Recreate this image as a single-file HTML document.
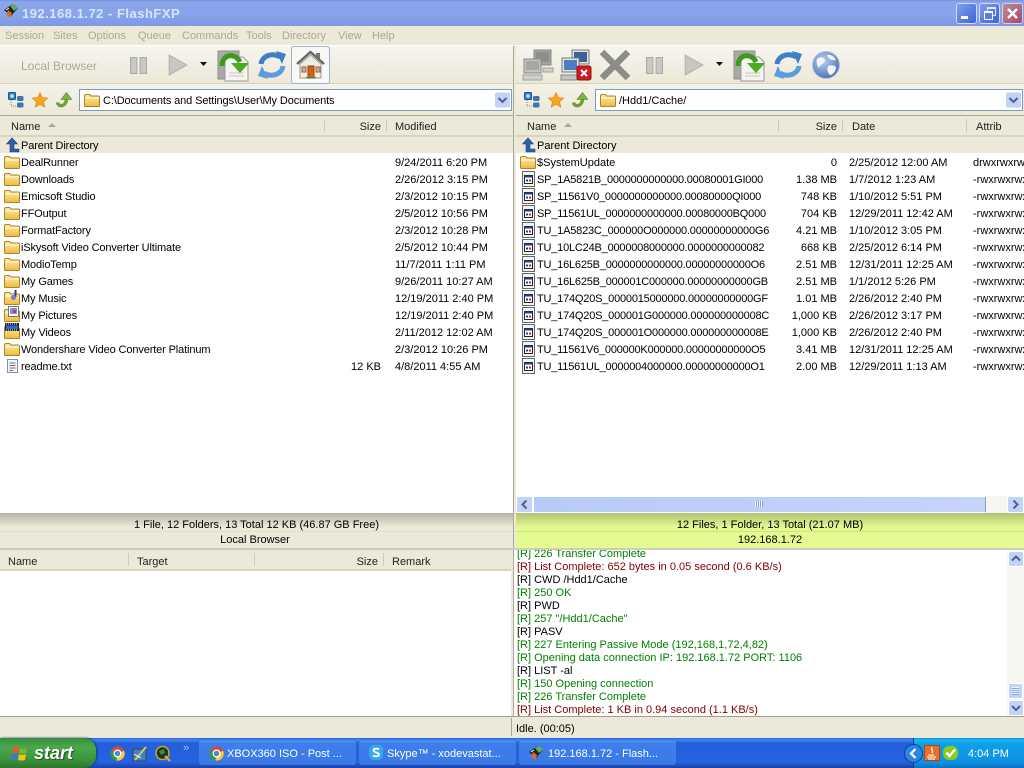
<!DOCTYPE html>
<html><head><meta charset="utf-8"><title>192.168.1.72 - FlashFXP</title>
<style>
html,body{margin:0;padding:0;width:1024px;height:768px;overflow:hidden;background:#ece9d8}
body{font:11px "Liberation Sans",sans-serif;color:#000;position:relative}
.a{position:absolute;white-space:nowrap}
.r{position:absolute;white-space:nowrap;text-align:right}
svg{position:absolute;overflow:visible}
.m{color:#aca899;top:30px;font-size:11px}
.h{top:121px;color:#222}
.g{color:#008000}.d{color:#800000}
.l{position:absolute;white-space:nowrap;height:13px;line-height:13px}
div[style*="left:537px;top"]{letter-spacing:-.2px}
div[style*="left:21px;top"]{letter-spacing:-.13px}
</style></head><body>
<svg width="0" height="0" style="position:absolute"><defs>
<linearGradient id="fg" x1="0" y1="0" x2="0" y2="1"><stop offset="0" stop-color="#ffeda6"/><stop offset="1" stop-color="#eeba3e"/></linearGradient>
<radialGradient id="gl" cx=".4" cy=".35" r=".75"><stop offset="0" stop-color="#b8d0f2"/><stop offset="1" stop-color="#3f68ac"/></radialGradient>
<symbol id="fo" viewBox="0 0 16 14"><path d="M.5 3V12.500Q.5 13.500 1.500 13.500H14.500Q15.500 13.500 15.500 12.500V4Q15.500 3 14.500 3H7L5.500 1.500H2Q.5 1.500 .5 3Z" fill="url(#fg)" stroke="#a8842a"/><path d="M1 5H15" stroke="#fff" stroke-opacity=".8"/></symbol>
<symbol id="ex" viewBox="0 0 16 16"><path d="M1.500 .5H13.500V15.500H1.500Z" fill="#f4f4f4" stroke="#666"/><rect x="3.500" y="4.500" width="8" height="8" fill="#fff" stroke="#222"/><rect x="3.500" y="4.500" width="8" height="2" fill="#1c3f9c"/><path d="M5 9.500H7" stroke="#1c3f9c" stroke-width="2"/><path d="M8 9.500H10" stroke="#c22" stroke-width="2"/></symbol>
<symbol id="dl" viewBox="0 0 32 32"><rect x="1" y="1" width="21" height="28" fill="#a9a9a5" stroke="#8e8e8a"/><path d="M8 7H26L31 12V31H8Z" fill="#f4f4f0" stroke="#999"/><path d="M12 23H27M12 26H27" stroke="#c5c5c0"/><path d="M5 16C5 4 18 2 23 12" fill="none" stroke="#3f9a1c" stroke-width="5"/><path d="M14 13H32L23 23Z" fill="#4caa1e"/></symbol>
<symbol id="rf" viewBox="0 0 28 28"><path d="M3 13C4 5 14 1 22 6" fill="none" stroke="#3e7fc8" stroke-width="5"/><path d="M18 0L28 3L24 13Z" fill="#3e7fc8"/><path d="M25 15C24 23 14 27 6 22" fill="none" stroke="#5c9bdc" stroke-width="5"/><path d="M10 28L0 25L4 15Z" fill="#5c9bdc"/></symbol>
<symbol id="pc" viewBox="0 0 32 32"><rect x="12" y="1" width="17" height="15" fill="#a2a29e" stroke="#8a8a86"/><rect x="14" y="3" width="13" height="10" fill="#8e8e8a"/><rect x="2" y="10" width="17" height="14" fill="#c4c4c0" stroke="#8a8a86"/><rect x="4" y="12" width="13" height="9" fill="#a6a6a2"/><rect x="1" y="26" width="19" height="5" fill="#d0d0cc" stroke="#a0a09c"/><rect x="21" y="19" width="10" height="4" fill="#d0d0cc" stroke="#a0a09c"/></symbol>
<symbol id="tb" viewBox="0 0 16 16"><rect x=".5" y=".5" width="7" height="7" rx="1" fill="#3a86d0" stroke="#1d4f88"/><rect x="9" y="4" width="6.500" height="5" rx="1.500" fill="#3f74b0"/><rect x="9" y="10.500" width="6.500" height="5" rx="1.500" fill="#3f74b0"/><path d="M3 8V14H8M3 7V7" stroke="#888" fill="none" stroke-dasharray="1 1"/><path d="M2 4H6M4 2V6" stroke="#fff"/></symbol>
<symbol id="st" viewBox="0 0 16 16"><path d="M8 .5L10.300 5.600L15.700 6.200L11.600 9.800L12.800 15.200L8 12.400L3.200 15.200L4.400 9.800L.3 6.200L5.700 5.600Z" fill="#f9a41e" stroke="#d9800c" stroke-width=".6"/></symbol>
<symbol id="up" viewBox="0 0 16 16"><path d="M1.500 10.500C2 15 10 15.500 10.500 7" fill="none" stroke="#6f9f38" stroke-width="3.400"/><path d="M10.500 .5L15.800 7.500H5Z" fill="#7fb342" stroke="#4e7f23" stroke-width=".6"/></symbol>
<symbol id="chr" viewBox="0 0 16 16"><circle cx="8" cy="8" r="7.500" fill="#dc4437"/><path d="M8 8L1.400 4.500A7.500 7.500 0 0 0 7 15.500Z" fill="#2e9e46"/><path d="M8 8L15 5A7.500 7.500 0 0 1 7 15.500Z" fill="#f7cb3a"/><circle cx="8" cy="8" r="3.600" fill="#4a88e0" stroke="#fff" stroke-width="1.300"/></symbol>
<symbol id="fx" viewBox="0 0 16 16"><path d="M1 7L9 1.500L15 5L8 13Z" fill="#222"/><path d="M7 3L11 1L15.500 4.500L11 8Z" fill="#58b060"/><path d="M5 7L9 10L7 15L3.500 12Z" fill="#dd6f1c"/><path d="M3 7L6 5" stroke="#fff"/></symbol>
<symbol id="dn" viewBox="0 0 17 17"><rect x=".5" y=".5" width="16" height="16" rx="2" fill="#c1d3fb" stroke="#fff"/><path d="M4.500 6.500L8.500 10.500L12.500 6.500" fill="none" stroke="#4d6185" stroke-width="2"/></symbol>
<symbol id="pl" viewBox="0 0 18 20"><path d="M1 1L17 10L1 19Z" fill="#c6c6c2" stroke="#b4b4b0"/></symbol>
<symbol id="pa" viewBox="0 0 16 16"><rect x=".5" y=".5" width="6" height="15" fill="#c9c9c5" stroke="#aaa"/><rect x="9.500" y=".5" width="6" height="15" fill="#c9c9c5" stroke="#aaa"/></symbol>
</defs></svg>

<!-- title bar -->
<div class="a" style="left:0;top:0;width:1024px;height:26px;background:linear-gradient(#7a90dc 0,#8ba6ea 8%,#87a3ea 60%,#7f99e2 100%)"></div>
<svg style="left:3px;top:3px" width="16" height="16"><use href="#fx"/></svg>
<div class="a" style="left:22px;top:6px;font:bold 13px 'Liberation Sans',sans-serif;color:#d8e4fb;letter-spacing:.5px">192.168.1.72 - FlashFXP</div>
<div class="a" style="left:956px;top:3px;width:19px;height:19px;border:1px solid #cfdcf8;border-radius:3px;background:linear-gradient(135deg,#7e9ef0,#3d62d8)"><div class="a" style="left:4px;top:12px;width:7px;height:3px;background:#fff"></div></div>
<div class="a" style="left:979px;top:3px;width:19px;height:19px;border:1px solid #cfdcf8;border-radius:3px;background:linear-gradient(135deg,#7e9ef0,#3d62d8)"><div class="a" style="left:7px;top:3px;width:7px;height:6px;border:1px solid #dfe8ff;border-top-width:2px"></div><div class="a" style="left:4px;top:7px;width:7px;height:6px;border:1px solid #fff;border-top-width:2px;background:#5a7de0"></div></div>
<div class="a" style="left:1002px;top:3px;width:19px;height:19px;border:1px solid #d8d0dc;border-radius:3px;background:linear-gradient(135deg,#c08a98,#a04c68)"><svg style="left:4px;top:4px" width="11" height="11"><path d="M1 1L10 10M10 1L1 10" stroke="#fff" stroke-width="2.400"/></svg></div>

<!-- menu -->
<div class="a m" style="left:5px">Session</div><div class="a m" style="left:53px">Sites</div><div class="a m" style="left:88px">Options</div><div class="a m" style="left:138px">Queue</div><div class="a m" style="left:182px">Commands</div><div class="a m" style="left:246px">Tools</div><div class="a m" style="left:282px">Directory</div><div class="a m" style="left:338px">View</div><div class="a m" style="left:372px">Help</div>
<div class="a" style="left:0;top:45px;width:1024px;height:1px;background:#fff"></div>

<!-- toolbars -->
<div class="a" style="left:0;top:46px;width:514px;height:37px;background:linear-gradient(#f6f5ef,#ece9d8)"></div>
<div class="a" style="left:516px;top:46px;width:508px;height:37px;background:linear-gradient(#f6f5ef,#ece9d8)"></div>
<div class="a" style="left:0;top:83px;width:1024px;height:1px;background:#d6d2bd"></div>
<div class="a" style="left:21px;top:59px;font-size:12px;color:#aca899;letter-spacing:0">Local Browser</div>
<svg style="left:130px;top:57px" width="17" height="17"><use href="#pa"/></svg>
<svg style="left:168px;top:54px" width="20" height="22"><use href="#pl"/></svg>
<svg style="left:200px;top:62px" width="7" height="4"><path d="M0 0H7L3.500 4Z" fill="#111"/></svg>
<svg style="left:217px;top:50px" width="32" height="32"><use href="#dl"/></svg>
<svg style="left:258px;top:51px" width="28" height="28"><use href="#rf"/></svg>
<div class="a" style="left:291px;top:46px;width:37px;height:36px;border:1px solid #9fb1cc;border-radius:3px;background:#f8f8f4"></div>
<svg style="left:296px;top:50px" width="29" height="29" viewBox="0 0 29 29"><path d="M1 14L14.500 2L28 14" fill="none" stroke="#666" stroke-width="2.500"/><path d="M20 3H24V9L20 6Z" fill="#777"/><path d="M4 14L14.500 5L25 14V28H4Z" fill="#f0ede0" stroke="#999"/><rect x="12" y="16" width="6" height="12" fill="#d9600e" stroke="#8a4a18"/><rect x="6" y="17" width="4" height="5" fill="#d3b27a" stroke="#866"/><rect x="20" y="17" width="4" height="5" fill="#d3b27a" stroke="#866"/><path d="M10 27.500H20" stroke="#2c9a3a"/></svg>

<svg style="left:522px;top:49px" width="32" height="32"><use href="#pc"/></svg>
<svg style="left:560px;top:49px" width="32" height="32" viewBox="0 0 32 32"><rect x="12" y="1" width="17" height="14" fill="#e4e4e0" stroke="#777"/><rect x="14" y="3" width="13" height="10" fill="#3f5f98"/><rect x="2" y="9" width="17" height="14" fill="#e4e4e0" stroke="#777"/><rect x="4" y="11" width="13" height="10" fill="#4f7cc0"/><rect x="1" y="26" width="16" height="5" fill="#c4c4c0" stroke="#888"/><rect x="17" y="17" width="14" height="14" rx="2" fill="#d01a22" stroke="#8c1016"/><path d="M21 21L27 27M27 21L21 27" stroke="#fff" stroke-width="2"/></svg>
<svg style="left:599px;top:49px" width="32" height="32"><path d="M3 3L29 29M29 3L3 29" stroke="#8c8c88" stroke-width="6.500"/></svg>
<svg style="left:646px;top:57px" width="17" height="17"><use href="#pa"/></svg>
<svg style="left:684px;top:54px" width="20" height="22"><use href="#pl"/></svg>
<svg style="left:716px;top:62px" width="7" height="4"><path d="M0 0H7L3.500 4Z" fill="#111"/></svg>
<svg style="left:733px;top:50px" width="32" height="32"><use href="#dl"/></svg>
<svg style="left:774px;top:51px" width="28" height="28"><use href="#rf"/></svg>
<svg style="left:812px;top:51px" width="28" height="28" viewBox="0 0 28 28"><circle cx="14" cy="14" r="13.500" fill="url(#gl)" stroke="#b4c2dc"/><path d="M5 8C8 5 12 6 13 9C13 13 8 13 7 17C5 15 4 11 5 8ZM15 4C18 3 22 5 24 9C20 10 16 8 15 4ZM16 15C20 14 24 14 24 17C23 22 20 24 18 24C15 21 15 18 16 15Z" fill="#f2f4f8"/></svg>

<!-- address bars -->
<div class="a" style="left:0;top:84px;width:514px;height:31px;background:linear-gradient(#f3f2ea,#ece9d8)"></div>
<div class="a" style="left:516px;top:84px;width:508px;height:31px;background:linear-gradient(#f3f2ea,#ece9d8)"></div>
<svg style="left:8px;top:92px" width="16" height="16"><use href="#tb"/></svg>
<svg style="left:32px;top:92px" width="16" height="16"><use href="#st"/></svg>
<svg style="left:56px;top:92px" width="16" height="16"><use href="#up"/></svg>
<svg style="left:524px;top:92px" width="16" height="16"><use href="#tb"/></svg>
<svg style="left:548px;top:92px" width="16" height="16"><use href="#st"/></svg>
<svg style="left:572px;top:92px" width="16" height="16"><use href="#up"/></svg>
<div class="a" style="left:79px;top:89px;width:431px;height:20px;background:#fff;border:1px solid #7f9db9"></div>
<svg style="left:84px;top:93px" width="16" height="14"><use href="#fo"/></svg>
<div class="a" style="left:103px;top:95px;letter-spacing:-.12px">C:\Documents and Settings\User\My Documents</div>
<svg style="left:494px;top:91px" width="17" height="18"><use href="#dn"/></svg>
<div class="a" style="left:595px;top:89px;width:426px;height:20px;background:#fff;border:1px solid #7f9db9"></div>
<svg style="left:600px;top:93px" width="16" height="14"><use href="#fo"/></svg>
<div class="a" style="left:619px;top:95px">/Hdd1/Cache/</div>
<svg style="left:1005px;top:91px" width="17" height="18"><use href="#dn"/></svg>

<!-- list bg -->
<div class="a" style="left:0;top:115px;width:1024px;height:1px;background:#aca899"></div>
<div class="a" style="left:0;top:116px;width:513px;height:19px;background:#ece9d8;border-bottom:2px solid #d8d4c0"></div>
<div class="a" style="left:516px;top:116px;width:508px;height:19px;background:#ece9d8;border-bottom:2px solid #d8d4c0"></div>
<div class="a" style="left:0;top:137px;width:513px;height:376px;background:#fff"></div>
<div class="a" style="left:516px;top:137px;width:508px;height:376px;background:#fff"></div>
<div class="a" style="left:513px;top:46px;width:3px;height:503px;background:#ece9d8;border-left:1px solid #aca899;box-sizing:border-box"></div>
<div class="a" style="left:0;top:137px;width:513px;height:16px;background:#ece9d8"></div>
<div class="a" style="left:516px;top:137px;width:508px;height:16px;background:#ece9d8"></div>

<!-- left headers -->
<div class="a h" style="left:11px">Name</div><svg style="left:48px;top:123px" width="8" height="4"><path d="M0 4L4 0L8 4Z" fill="#aca899"/></svg>
<div class="a" style="left:324px;top:119px;width:1px;height:13px;background:#cfcbb6"></div>
<div class="r h" style="left:331px;width:50px">Size</div>
<div class="a" style="left:386px;top:119px;width:1px;height:13px;background:#cfcbb6"></div>
<div class="a h" style="left:395px">Modified</div>

<!-- right headers -->
<div class="a h" style="left:527px">Name</div><svg style="left:564px;top:123px" width="8" height="4"><path d="M0 4L4 0L8 4Z" fill="#aca899"/></svg>
<div class="a" style="left:778px;top:119px;width:1px;height:13px;background:#cfcbb6"></div>
<div class="r h" style="left:787px;width:50px">Size</div>
<div class="a" style="left:842px;top:119px;width:1px;height:13px;background:#cfcbb6"></div>
<div class="a h" style="left:852px">Date</div>
<div class="a" style="left:966px;top:119px;width:1px;height:13px;background:#cfcbb6"></div>
<div class="a h" style="left:976px">Attrib</div>

<!-- left list -->
<svg style="left:5px;top:137px" width="15" height="16" viewBox="0 0 15 16"><path d="M7 1L1.500 7H5V15H14V12H9V7H12.500Z" fill="#2f5fa8" stroke="#1e3f78" stroke-width=".6"/></svg>
<div class="a" style="left:21px;top:140px">Parent Directory</div>
<svg style="left:4px;top:155px" width="16" height="14"><use href="#fo"/></svg><div class="a" style="left:21px;top:157px">DealRunner</div><div class="a" style="left:395px;top:157px">9/24/2011 6:20 PM</div>
<svg style="left:4px;top:172px" width="16" height="14"><use href="#fo"/></svg><div class="a" style="left:21px;top:174px">Downloads</div><div class="a" style="left:395px;top:174px">2/26/2012 3:15 PM</div>
<svg style="left:4px;top:189px" width="16" height="14"><use href="#fo"/></svg><div class="a" style="left:21px;top:191px">Emicsoft Studio</div><div class="a" style="left:395px;top:191px">2/3/2012 10:15 PM</div>
<svg style="left:4px;top:206px" width="16" height="14"><use href="#fo"/></svg><div class="a" style="left:21px;top:208px">FFOutput</div><div class="a" style="left:395px;top:208px">2/5/2012 10:56 PM</div>
<svg style="left:4px;top:223px" width="16" height="14"><use href="#fo"/></svg><div class="a" style="left:21px;top:225px">FormatFactory</div><div class="a" style="left:395px;top:225px">2/3/2012 10:28 PM</div>
<svg style="left:4px;top:240px" width="16" height="14"><use href="#fo"/></svg><div class="a" style="left:21px;top:242px">iSkysoft Video Converter Ultimate</div><div class="a" style="left:395px;top:242px">2/5/2012 10:44 PM</div>
<svg style="left:4px;top:257px" width="16" height="14"><use href="#fo"/></svg><div class="a" style="left:21px;top:259px">ModioTemp</div><div class="a" style="left:395px;top:259px">11/7/2011 1:11 PM</div>
<svg style="left:4px;top:274px" width="16" height="14"><use href="#fo"/></svg><div class="a" style="left:21px;top:276px">My Games</div><div class="a" style="left:395px;top:276px">9/26/2011 10:27 AM</div>
<svg style="left:4px;top:291px" width="16" height="14"><use href="#fo"/></svg><svg style="left:10px;top:289px" width="9" height="12"><path d="M5.500 1V8" stroke="#2a3c90" stroke-width="2"/><circle cx="3.500" cy="8.500" r="2.500" fill="#7a7ad0"/></svg><div class="a" style="left:21px;top:293px">My Music</div><div class="a" style="left:395px;top:293px">12/19/2011 2:40 PM</div>
<svg style="left:4px;top:308px" width="16" height="14"><use href="#fo"/></svg><svg style="left:8px;top:306px" width="11" height="11"><rect x=".5" y=".5" width="10" height="10" fill="#fff" stroke="#777"/><rect x="2" y="2" width="7" height="6" fill="#6c9ae0"/><rect x="5" y="4" width="3" height="3" fill="#e25"/></svg><div class="a" style="left:21px;top:310px">My Pictures</div><div class="a" style="left:395px;top:310px">12/19/2011 2:40 PM</div>
<svg style="left:4px;top:325px" width="16" height="14"><use href="#fo"/></svg><svg style="left:5px;top:323px" width="14" height="8"><rect width="14" height="8" fill="#222"/><rect x="1" y="2.500" width="12" height="3.500" fill="#2a66e0"/><path d="M1 1H13M1 7H13" stroke="#fff" stroke-dasharray="1 1"/></svg><div class="a" style="left:21px;top:327px">My Videos</div><div class="a" style="left:395px;top:327px">2/11/2012 12:02 AM</div>
<svg style="left:4px;top:342px" width="16" height="14"><use href="#fo"/></svg><div class="a" style="left:21px;top:344px">Wondershare Video Converter Platinum</div><div class="a" style="left:395px;top:344px">2/3/2012 10:26 PM</div>
<svg style="left:6px;top:358px" width="13" height="15"><rect x="1.500" y="1.500" width="10" height="13" fill="#f3f5fa" stroke="#7d8fb8"/><path d="M3.500 5H9.500M3.500 7.500H9.500M3.500 10H9.500M3.500 12.500H7" stroke="#6a6a80"/></svg><div class="a" style="left:21px;top:361px">readme.txt</div><div class="r" style="left:331px;width:50px;top:361px">12 KB</div><div class="a" style="left:395px;top:361px">4/8/2011 4:55 AM</div>

<!-- right list -->
<svg style="left:521px;top:137px" width="15" height="16" viewBox="0 0 15 16"><path d="M7 1L1.500 7H5V15H14V12H9V7H12.500Z" fill="#2f5fa8" stroke="#1e3f78" stroke-width=".6"/></svg>
<div class="a" style="left:537px;top:140px;letter-spacing:0">Parent Directory</div>
<svg style="left:520px;top:155px" width="16" height="14"><use href="#fo"/></svg><div class="a" style="left:537px;top:157px;letter-spacing:0">$SystemUpdate</div><div class="r" style="left:787px;width:50px;top:157px">0</div><div class="a" style="left:849px;top:157px">2/25/2012 12:00 AM</div><div class="a" style="left:973px;top:157px">drwxrwxrwx</div>
<svg style="left:521px;top:171px" width="16" height="16"><use href="#ex"/></svg><div class="a" style="left:537px;top:174px">SP_1A5821B_0000000000000.00080001GI000</div><div class="r" style="left:787px;width:50px;top:174px">1.38 MB</div><div class="a" style="left:849px;top:174px">1/7/2012 1:23 AM</div><div class="a" style="left:973px;top:174px">-rwxrwxrwx</div>
<svg style="left:521px;top:188px" width="16" height="16"><use href="#ex"/></svg><div class="a" style="left:537px;top:191px">SP_11561V0_0000000000000.00080000QI000</div><div class="r" style="left:787px;width:50px;top:191px">748 KB</div><div class="a" style="left:849px;top:191px">1/10/2012 5:51 PM</div><div class="a" style="left:973px;top:191px">-rwxrwxrwx</div>
<svg style="left:521px;top:205px" width="16" height="16"><use href="#ex"/></svg><div class="a" style="left:537px;top:208px">SP_11561UL_0000000000000.00080000BQ000</div><div class="r" style="left:787px;width:50px;top:208px">704 KB</div><div class="a" style="left:849px;top:208px">12/29/2011 12:42 AM</div><div class="a" style="left:973px;top:208px">-rwxrwxrwx</div>
<svg style="left:521px;top:222px" width="16" height="16"><use href="#ex"/></svg><div class="a" style="left:537px;top:225px">TU_1A5823C_000000O000000.00000000000G6</div><div class="r" style="left:787px;width:50px;top:225px">4.21 MB</div><div class="a" style="left:849px;top:225px">1/10/2012 3:05 PM</div><div class="a" style="left:973px;top:225px">-rwxrwxrwx</div>
<svg style="left:521px;top:239px" width="16" height="16"><use href="#ex"/></svg><div class="a" style="left:537px;top:242px">TU_10LC24B_0000008000000.0000000000082</div><div class="r" style="left:787px;width:50px;top:242px">668 KB</div><div class="a" style="left:849px;top:242px">2/25/2012 6:14 PM</div><div class="a" style="left:973px;top:242px">-rwxrwxrwx</div>
<svg style="left:521px;top:256px" width="16" height="16"><use href="#ex"/></svg><div class="a" style="left:537px;top:259px">TU_16L625B_0000000000000.00000000000O6</div><div class="r" style="left:787px;width:50px;top:259px">2.51 MB</div><div class="a" style="left:849px;top:259px">12/31/2011 12:25 AM</div><div class="a" style="left:973px;top:259px">-rwxrwxrwx</div>
<svg style="left:521px;top:273px" width="16" height="16"><use href="#ex"/></svg><div class="a" style="left:537px;top:276px">TU_16L625B_000001C000000.00000000000GB</div><div class="r" style="left:787px;width:50px;top:276px">2.51 MB</div><div class="a" style="left:849px;top:276px">1/1/2012 5:26 PM</div><div class="a" style="left:973px;top:276px">-rwxrwxrwx</div>
<svg style="left:521px;top:290px" width="16" height="16"><use href="#ex"/></svg><div class="a" style="left:537px;top:293px">TU_174Q20S_0000015000000.00000000000GF</div><div class="r" style="left:787px;width:50px;top:293px">1.01 MB</div><div class="a" style="left:849px;top:293px">2/26/2012 2:40 PM</div><div class="a" style="left:973px;top:293px">-rwxrwxrwx</div>
<svg style="left:521px;top:307px" width="16" height="16"><use href="#ex"/></svg><div class="a" style="left:537px;top:310px">TU_174Q20S_000001G000000.000000000008C</div><div class="r" style="left:787px;width:50px;top:310px">1,000 KB</div><div class="a" style="left:849px;top:310px">2/26/2012 3:17 PM</div><div class="a" style="left:973px;top:310px">-rwxrwxrwx</div>
<svg style="left:521px;top:324px" width="16" height="16"><use href="#ex"/></svg><div class="a" style="left:537px;top:327px">TU_174Q20S_000001O000000.000000000008E</div><div class="r" style="left:787px;width:50px;top:327px">1,000 KB</div><div class="a" style="left:849px;top:327px">2/26/2012 2:40 PM</div><div class="a" style="left:973px;top:327px">-rwxrwxrwx</div>
<svg style="left:521px;top:341px" width="16" height="16"><use href="#ex"/></svg><div class="a" style="left:537px;top:344px">TU_11561V6_000000K000000.00000000000O5</div><div class="r" style="left:787px;width:50px;top:344px">3.41 MB</div><div class="a" style="left:849px;top:344px">12/31/2011 12:25 AM</div><div class="a" style="left:973px;top:344px">-rwxrwxrwx</div>
<svg style="left:521px;top:358px" width="16" height="16"><use href="#ex"/></svg><div class="a" style="left:537px;top:361px">TU_11561UL_0000004000000.00000000000O1</div><div class="r" style="left:787px;width:50px;top:361px">2.00 MB</div><div class="a" style="left:849px;top:361px">12/29/2011 1:13 AM</div><div class="a" style="left:973px;top:361px">-rwxrwxrwx</div>

<!-- horizontal scrollbar -->
<div class="a" style="left:516px;top:496px;width:508px;height:17px;background:#f6f5ef"></div>
<svg style="left:516px;top:496px" width="17" height="17"><rect x=".5" y=".5" width="16" height="16" rx="2" fill="#c1d3fb" stroke="#fff"/><path d="M10.500 4.500L6.500 8.500L10.500 12.500" fill="none" stroke="#4d6185" stroke-width="2"/></svg>
<svg style="left:1007px;top:496px" width="17" height="17"><rect x=".5" y=".5" width="16" height="16" rx="2" fill="#c1d3fb" stroke="#fff"/><path d="M6.500 4.500L10.500 8.500L6.500 12.500" fill="none" stroke="#4d6185" stroke-width="2"/></svg>
<div class="a" style="left:533px;top:496px;width:451px;height:15px;border:1px solid #fff;border-right-color:#7f9db9;border-radius:2px;background:linear-gradient(90deg,#b8caf8,#c6d4fb)"></div>
<div class="a" style="left:755px;top:501px;width:8px;height:6px;background:repeating-linear-gradient(90deg,#eef3ff 0 1px,#8ca5d8 1px 2px)"></div>

<!-- status bars -->
<div class="a" style="left:0;top:513px;width:513px;height:36px;background:linear-gradient(#b5b3a6 0,#ece9d8 14px)"></div>
<div class="a" style="left:0;top:531px;width:513px;height:1px;background:#e2dfcc"></div>
<div class="a" style="left:516px;top:513px;width:508px;height:35px;background:linear-gradient(#b2c070 0,#e2f993 14px,#e4fb92)"></div>
<div class="a" style="left:516px;top:531px;width:508px;height:1px;background:#cfe47c"></div>
<div class="a" style="left:0;top:519px;width:513px;text-align:center">1 File, 12 Folders, 13 Total 12 KB (46.87 GB Free)</div>
<div class="a" style="left:0;top:534px;width:510px;text-align:center">Local Browser</div>
<div class="a" style="left:516px;top:519px;width:508px;text-align:center">12 Files, 1 Folder, 13 Total (21.07 MB)</div>
<div class="a" style="left:516px;top:534px;width:508px;text-align:center">192.168.1.72</div>
<div class="a" style="left:0;top:548px;width:1024px;height:2px;background:#cfccb8"></div>

<!-- queue panel -->
<div class="a" style="left:0;top:550px;width:511px;height:19px;background:#ece9d8;border-bottom:2px solid #d8d4c0"></div>
<div class="a" style="left:0;top:571px;width:511px;height:145px;background:#fff"></div>
<div class="a" style="left:8px;top:556px;color:#222">Name</div>
<div class="a" style="left:128px;top:553px;width:1px;height:13px;background:#cfcbb6"></div>
<div class="a" style="left:137px;top:556px;color:#222">Target</div>
<div class="a" style="left:254px;top:553px;width:1px;height:13px;background:#cfcbb6"></div>
<div class="r" style="left:328px;width:50px;top:556px;color:#222">Size</div>
<div class="a" style="left:383px;top:553px;width:1px;height:13px;background:#cfcbb6"></div>
<div class="a" style="left:392px;top:556px;color:#222">Remark</div>
<div class="a" style="left:511px;top:550px;width:3px;height:166px;background:#ece9d8;border-right:1px solid #aca899;box-sizing:border-box"></div>

<!-- log -->
<div class="a" style="left:514px;top:550px;width:510px;height:166px;background:#fff;overflow:hidden">
<div class="l g" style="left:3px;top:-2px">[R] 226 Transfer Complete</div>
<div class="l d" style="left:3px;top:11px">[R] List Complete: 652 bytes in 0.05 second (0.6 KB/s)</div>
<div class="l" style="left:3px;top:24px">[R] CWD /Hdd1/Cache</div>
<div class="l g" style="left:3px;top:37px">[R] 250 OK</div>
<div class="l" style="left:3px;top:50px">[R] PWD</div>
<div class="l g" style="left:3px;top:63px">[R] 257 "/Hdd1/Cache"</div>
<div class="l" style="left:3px;top:76px">[R] PASV</div>
<div class="l g" style="left:3px;top:89px">[R] 227 Entering Passive Mode (192,168,1,72,4,82)</div>
<div class="l g" style="left:3px;top:102px">[R] Opening data connection IP: 192.168.1.72 PORT: 1106</div>
<div class="l" style="left:3px;top:115px">[R] LIST -al</div>
<div class="l g" style="left:3px;top:128px">[R] 150 Opening connection</div>
<div class="l g" style="left:3px;top:141px">[R] 226 Transfer Complete</div>
<div class="l d" style="left:3px;top:154px">[R] List Complete: 1 KB in 0.94 second (1.1 KB/s)</div>
</div>
<div class="a" style="left:1007px;top:550px;width:17px;height:166px;background:#f6f5ef"></div>
<svg style="left:1008px;top:551px" width="16" height="16"><rect x=".5" y=".5" width="15" height="15" rx="2" fill="#c1d3fb" stroke="#fff"/><path d="M4 9.500L8 5.500L12 9.500" fill="none" stroke="#4d6185" stroke-width="2"/></svg>
<svg style="left:1008px;top:700px" width="16" height="16"><rect x=".5" y=".5" width="15" height="15" rx="2" fill="#c1d3fb" stroke="#fff"/><path d="M4 6L8 10L12 6" fill="none" stroke="#4d6185" stroke-width="2"/></svg>
<div class="a" style="left:1008px;top:683px;width:15px;height:16px;border-radius:2px;background:#c1d3fb;box-shadow:inset 0 0 0 1px #fff"><div class="a" style="left:4px;top:4px;width:7px;height:8px;background:repeating-linear-gradient(#eef3ff 0 1px,#8ca5d8 1px 2px)"></div></div>

<!-- bottom status -->
<div class="a" style="left:0;top:716px;width:1024px;height:22px;background:#ece9d8;border-top:1px solid #a09e90;box-sizing:border-box"></div>
<div class="a" style="left:511px;top:718px;width:1px;height:18px;background:#aca899"></div>
<div class="a" style="left:516px;top:723px">Idle. (00:05)</div>

<!-- taskbar -->
<div class="a" style="left:0;top:738px;width:1024px;height:30px;background:linear-gradient(#245edb 0,#3f8cf3 2px,#245edb 5px,#2663e0 24px,#1941a5 30px)"></div>
<div class="a" style="left:0;top:738px;width:96px;height:30px;border-radius:0 12px 12px 0;background:linear-gradient(#388e3c 0,#4aa74a 30%,#3c963c 70%,#2d752d 100%);box-shadow:1px 0 2px #123a88"></div>
<svg style="left:11px;top:745px" width="18" height="18" viewBox="0 0 18 18"><path d="M2 3Q5 1 8 3L7 8Q4 7 1 8Z" fill="#e8562a"/><path d="M9 3Q12 5 16 3L15 8Q12 9 8 8Z" fill="#7ab832"/><path d="M1 9Q4 8 7 9L6 15Q3 13 0 15Z" fill="#3a78e0"/><path d="M8 9Q11 11 15 9L14 15Q11 16 7 15Z" fill="#f4c21f"/></svg>
<div class="a" style="left:34px;top:743px;font:italic bold 18px 'Liberation Sans',sans-serif;color:#fff;text-shadow:1px 1px 1px #1f4f1f">start</div>
<svg style="left:110px;top:746px" width="15" height="15"><use href="#chr"/></svg>
<svg style="left:132px;top:746px" width="16" height="16" viewBox="0 0 16 16"><rect x="1" y="3" width="13" height="12" fill="#3d7fc8" stroke="#444"/><path d="M3 14L14 1" stroke="#d8c84a" stroke-width="2"/><path d="M2 8L9 12" stroke="#fff"/></svg>
<svg style="left:155px;top:745px" width="16" height="17" viewBox="0 0 16 17"><circle cx="7.500" cy="8" r="6.500" fill="#14381f" stroke="#c9a92c" stroke-width="1.500"/><path d="M10 11L15 16" stroke="#e0b52c" stroke-width="2"/><path d="M4 6L9 4L10 8L6 10Z" fill="#3f8a3c"/></svg>
<div class="a" style="left:183px;top:742px;font-size:11px;color:#a8c6f5;letter-spacing:-1px">››</div>
<div class="a" style="left:199px;top:741px;width:157px;height:24px;border-radius:3px;background:linear-gradient(#3f80ea,#3a78e6);box-shadow:inset 0 1px 0 #5e97f2"></div>
<svg style="left:209px;top:746px" width="15" height="15"><use href="#chr"/></svg>
<div class="a" style="left:227px;top:748px;color:#fff">XBOX360 ISO - Post ...</div>
<div class="a" style="left:359px;top:741px;width:157px;height:24px;border-radius:3px;background:linear-gradient(#3f80ea,#3a78e6);box-shadow:inset 0 1px 0 #5e97f2"></div>
<svg style="left:368px;top:744px" width="16" height="17" viewBox="0 0 16 17"><rect x="1" y="1" width="14" height="15" rx="5" fill="#36a9e8"/><path d="M11 5.500C9 4 5.500 4.500 5.500 6.500S11 8.500 11 10.500S7 13 5 11.500" fill="none" stroke="#fff" stroke-width="1.800"/></svg>
<div class="a" style="left:387px;top:748px;color:#fff">Skype™ - xodevastat...</div>
<div class="a" style="left:519px;top:741px;width:157px;height:24px;border-radius:3px;background:linear-gradient(#3f80ea,#3a78e6);box-shadow:inset 0 1px 0 #5e97f2"></div>
<svg style="left:528px;top:745px" width="16" height="16"><use href="#fx"/></svg>
<div class="a" style="left:548px;top:748px;color:#fff">192.168.1.72 - Flash...</div>

<!-- tray -->
<div class="a" style="left:913px;top:738px;width:111px;height:30px;background:linear-gradient(#0f8ae0 0,#18b8f2 2px,#0f9fe8 6px,#0e92e2 24px,#0b6fc4 30px);border-left:1px solid #0b3f8c;box-sizing:border-box"></div>
<svg style="left:904px;top:744px" width="19" height="19"><circle cx="9.500" cy="9.500" r="9" fill="#2a86e0" stroke="#123f90"/><path d="M11.500 5L7 9.500L11.500 14" fill="none" stroke="#fff" stroke-width="2.200"/></svg>
<svg style="left:924px;top:745px" width="16" height="16" viewBox="0 0 16 16"><rect x=".5" y=".5" width="15" height="15" fill="#e8702a" stroke="#a8481a"/><path d="M3 12H12M4 14H11M4 10H10" stroke="#fff"/><path d="M8 2C6 5 10 5 8 8" fill="none" stroke="#fff" stroke-width="1.200"/></svg>
<svg style="left:942px;top:745px" width="17" height="16" viewBox="0 0 17 16"><rect x="1" y="1" width="15" height="14" rx="6" fill="#8ec81e"/><path d="M4.500 7.500L7.500 11L13 4.500" fill="none" stroke="#fff" stroke-width="2.400"/></svg>
<div class="a" style="left:968px;top:748px;color:#fff">4:04 PM</div>
</body></html>
